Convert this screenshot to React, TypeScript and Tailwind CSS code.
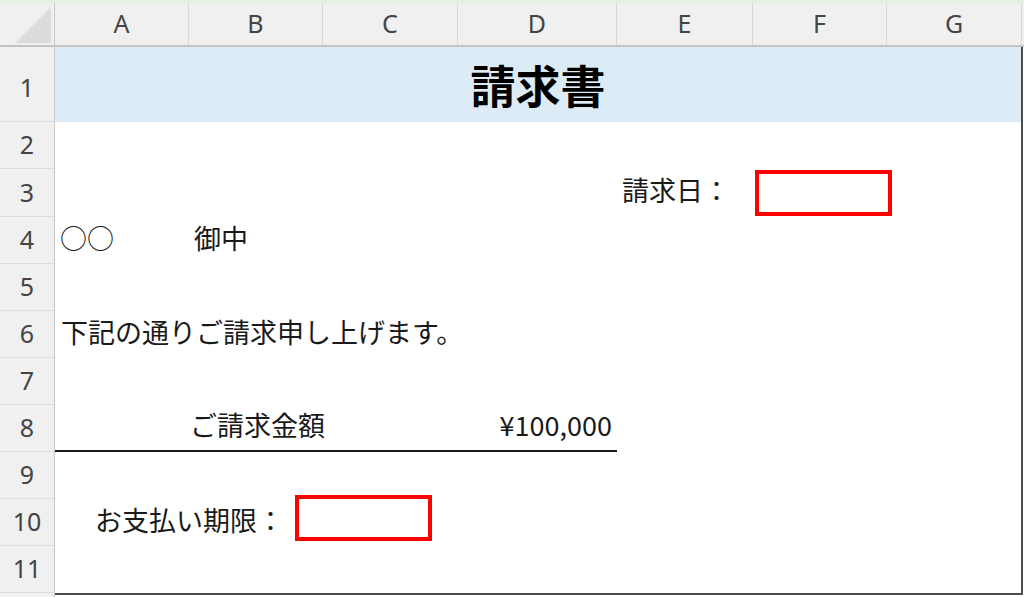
import React from 'react';

const COLUMNS = [
  { label: 'A', width: 134 },
  { label: 'B', width: 134 },
  { label: 'C', width: 135 },
  { label: 'D', width: 159 },
  { label: 'E', width: 136 },
  { label: 'F', width: 134 },
  { label: 'G', width: 135 },
];

const ROW_HEIGHTS = [75, 47, 48, 47, 47, 47, 47, 47, 47, 47, 47];

const RedBox: React.FC<{ className?: string }> = ({ className = '' }) => (
  <div className={`w-[137px] h-[46px] border-4 border-[#ff0000] shrink-0 ${className}`} />
);

const CornerCell: React.FC = () => (
  <div className="w-[55px] h-full shrink-0 border-r border-[#c9c9c9]">
    <svg width="54" height="44" className="block">
      <polygon points="51,4 51,40 15,40" fill="#dcdcdc" />
    </svg>
  </div>
);

const ColumnHeader: React.FC = () => (
  <div className="h-[44px] flex bg-[#f0f0f0] border-b-2 border-[#c4c4c4] shrink-0">
    <CornerCell />
    {COLUMNS.map((c) => (
      <div
        key={c.label}
        style={{ width: c.width }}
        className="shrink-0 h-full flex items-center justify-center border-r border-[#d9d9d9] text-[25px] text-[#444]"
      >
        {c.label}
      </div>
    ))}
    <div className="flex-1" />
  </div>
);

const RowHeaders: React.FC = () => (
  <div className="w-[55px] shrink-0 flex flex-col bg-[#f0f0f0] border-r border-[#c9c9c9]">
    {ROW_HEIGHTS.map((h, i) => (
      <div
        key={i}
        style={{ height: h }}
        className={`shrink-0 flex items-center justify-center border-b border-[#dcdcdc] text-[25px] text-[#444] ${i === 0 ? 'pt-[7px]' : ''}`}
      >
        {i + 1}
      </div>
    ))}
  </div>
);

function Row({ idx, className = '', children }: { idx: number; className?: string; children?: React.ReactNode }) {
  return (
    <div style={{ height: ROW_HEIGHTS[idx] }} className={`shrink-0 flex items-center ${className}`}>
      {children}
    </div>
  );
}

export default function App() {
  return (
    <div
      className="w-[1024px] h-[597px] overflow-hidden bg-white flex flex-col"
      style={{ fontFamily: '"Noto Sans", "Noto Sans CJK JP", sans-serif' }}
    >
      <div className="h-[3px] bg-[#e4f0e4] shrink-0" />
      <ColumnHeader />

      <div className="flex flex-1 min-h-0">
        <RowHeaders />

        <div
          className="w-[968px] self-start flex flex-col border-r-2 border-b-2 border-[#4d4d4d] text-[27px] text-[#1a1a1a] whitespace-nowrap"
          style={{ fontFamily: '"Noto Sans CJK JP", sans-serif' }}
        >
          {/* 1 */}
          <Row idx={0} className="bg-[#ddebf7] justify-center">
            <span className="text-[45px] font-bold text-black leading-none">請求書</span>
          </Row>

          {/* 2 */}
          <Row idx={1} />

          {/* 3 */}
          <Row idx={2}>
            <div className="w-[562px] shrink-0" />
            <div className="w-[136px] shrink-0 pl-[5px] pb-[5px]">請求日：</div>
            <RedBox className="ml-[2px]" />
          </Row>

          {/* 4 */}
          <Row idx={3} className="pb-[4px]">
            <div className="w-[134px] shrink-0 pl-[5px]">○○</div>
            <div className="pl-[5px]">御中</div>
          </Row>

          {/* 5 */}
          <Row idx={4} />

          {/* 6 */}
          <Row idx={5} className="pb-[5px]">
            <div className="pl-[6px]">下記の通りご請求申し上げます。</div>
          </Row>

          {/* 7 */}
          <Row idx={6} />

          {/* 8 */}
          <Row idx={7} className="items-stretch">
            <div className="w-[562px] shrink-0 flex items-center pb-[5px] border-b-2 border-[#1a1a1a]">
              <div className="w-[134px] shrink-0" />
              <div className="flex-1 pl-[1px]">ご請求金額</div>
              <div className="pr-[5px]">¥100,000</div>
            </div>
          </Row>

          {/* 9 */}
          <Row idx={8} />

          {/* 10 */}
          <Row idx={9}>
            <div className="w-[240px] shrink-0 pl-[40px] pb-[4px]">お支払い期限：</div>
            <RedBox className="mb-[10px]" />
          </Row>

          {/* 11 */}
          <Row idx={10} />
        </div>
      </div>
    </div>
  );
}
